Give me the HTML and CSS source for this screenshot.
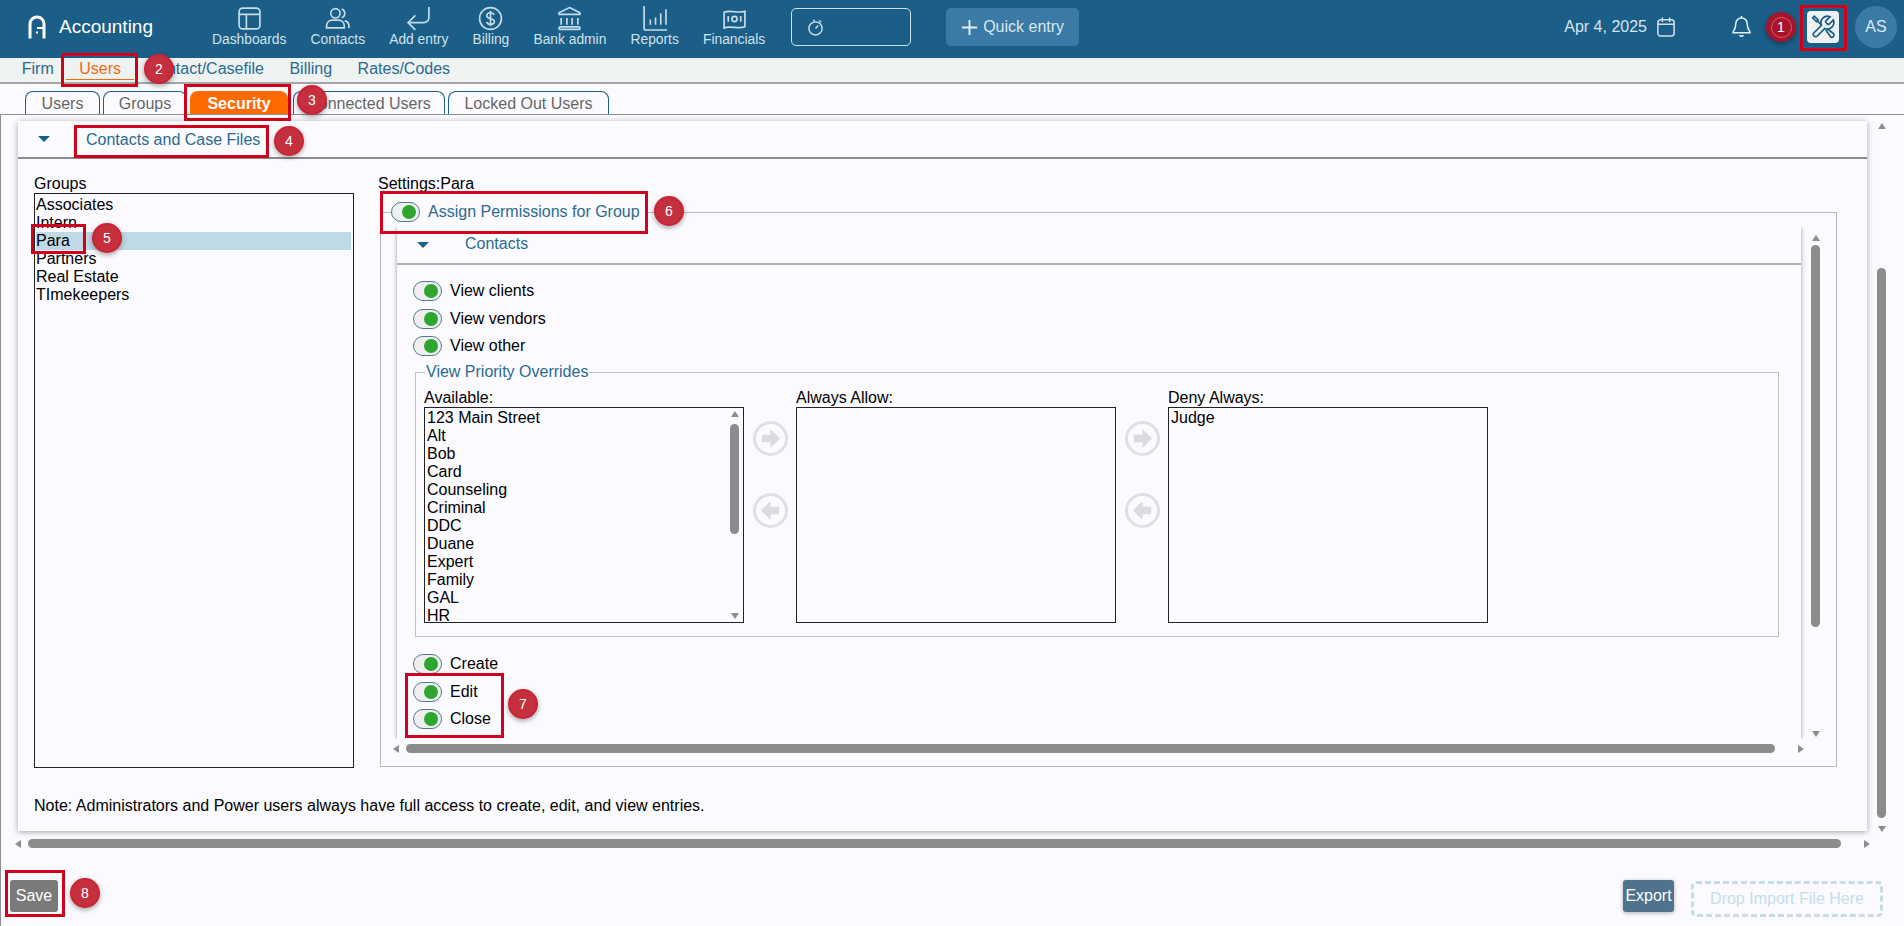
FILE: index.html
```html
<!DOCTYPE html>
<html lang="en">
<head>
<meta charset="utf-8">
<title>Accounting</title>
<link rel="stylesheet" href="styles.css">
</head>
<body>
<div class="app">
  <header class="topbar">
    <div class="brand">
      <svg class="logo" viewBox="0 0 18 24" fill="none" stroke="#fff" stroke-width="3"><path d="M2 23.500V9a7 7 0 0 1 14 0v14.500"/><path d="M8 17.500h2" stroke-width="2"/><path d="M9 13h7" stroke-width="2"/></svg>
      <span class="brand-name">Accounting</span>
    </div>
    <nav class="mainnav">
      <a class="navitem"><svg class="navicon" viewBox="0 0 24 24"><rect x="2" y="2" width="20" height="20" rx="3.5"/><path d="M2 8h20M9 8v14"/></svg>Dashboards</a>
      <a class="navitem"><svg class="navicon" viewBox="0 0 24 24"><circle cx="10" cy="7" r="4.5"/><path d="M1.5 21v-2a5.5 5.5 0 0 1 5.5-5.5h6a5.5 5.5 0 0 1 5.500 5.500v2z"/><path d="M16 2.800a4.500 4.500 0 0 1 0 8.500M19 14a5.500 5.500 0 0 1 4 5.500V21"/></svg>Contacts</a>
      <a class="navitem"><svg class="navicon" viewBox="0 0 24 24"><path d="M22 1v10a5 5 0 0 1-5 5H2"/><path d="M9 9l-7 7 7 7"/></svg>Add entry</a>
      <a class="navitem"><svg class="navicon" viewBox="0 0 24 24"><circle cx="12" cy="12" r="10.500"/><path d="M15.500 8.500c-.6-1.500-2-2-3.500-2-2 0-3.500 1-3.500 2.800 0 4 7.200 1.800 7.200 5.600 0 1.700-1.700 2.700-3.700 2.700-1.700 0-3.200-.7-3.700-2.300M12 4.500v15"/></svg>Billing</a>
      <a class="navitem"><svg class="navicon" viewBox="0 0 24 24"><path d="M12 1.500 22 6.500v1.500H2V6.500zM4 11.500v6.500M9.500 11.500v6.500M14.500 11.500v6.500M20 11.500v6.500"/><rect x="2" y="20" width="20" height="2.500" rx="1"/></svg>Bank admin</a>
      <a class="navitem"><svg class="navicon" viewBox="0 0 24 24"><path d="M2 0v21a2 2 0 0 0 2 2h20M8 13v5M13 11v7M18 7v11M23 3v15"/></svg>Reports</a>
      <a class="navitem"><svg class="navicon" viewBox="0 0 24 24"><path d="M2 6c6 -2.500 14 1.500 20 -1v15c-6 2.500-14-1.500-20 1z"/><circle cx="12" cy="12.500" r="2.500"/><path d="M6 9.500v5.500M18 9.500v5.500"/></svg>Financials</a>
    </nav>
    <button class="timer"><svg class="timer-icon" viewBox="0 0 18 18"><circle cx="9" cy="10" r="7"/><path d="M9 10l3-3M6.500 1.500h2M13 1.500l2 2"/></svg></button>
    <button class="quick"><svg class="plus" viewBox="0 0 18 18"><path d="M9 1v16M1 9h16"/></svg>Quick entry</button>
    <div class="date">Apr 4, 2025<svg class="cal" viewBox="0 0 20 22"><rect x="1" y="3" width="18" height="18" rx="3"/><path d="M1 8h18M6 .5v5M14 .5v5"/></svg></div>
    <svg class="bell" viewBox="0 0 20 24"><path d="M10 3a6 6 0 0 0-6 6c0 6-3 8-3 9.500h18c0-1.500-3-3.500-3-9.500a6 6 0 0 0-6-6zM8 21c1 1.600 3 1.600 4 0M10 1v2"/></svg>
    <button class="tools"><svg class="tools-icon" viewBox="0 0 24 24"><path d="M14.700 6.300a1 1 0 0 0 0 1.400l1.600 1.600a1 1 0 0 0 1.400 0l3.800-3.800a6 6 0 0 1-7.900 7.900l-6.900 6.900a2.100 2.100 0 0 1-3-3l6.900-6.900a6 6 0 0 1 7.900-7.900z"/><path d="M2.500 3.500 4 2l3.500 3.500-1.500 1.500zM7 6.500l3.500 3.500M14.500 14.500l4.500 6.500a2 2 0 0 0 2.800-2.800l-6-4.700"/></svg></button>
    <div class="avatar">AS</div>
  </header>

  <nav class="subnav">
    <a class="subitem">Firm</a>
    <a class="subitem active">Users</a>
    <a class="subitem">Contact/Casefile</a>
    <a class="subitem">Billing</a>
    <a class="subitem">Rates/Codes</a>
  </nav>

  <div class="tabs">
    <a class="tab tab-users">Users</a>
    <a class="tab tab-groups">Groups</a>
    <a class="tab tab-security">Security</a>
    <a class="tab tab-connected">Connected Users</a>
    <a class="tab tab-locked">Locked Out Users</a>
  </div>

  <main class="main">
    <div class="workspace">
      <section class="panel">
        <div class="panel-head">
          <span class="caret"></span>
          <span class="panel-title">Contacts and Case Files</span>
        </div>
        <div class="panel-body">
          <div class="columns">
            <div class="groups">
              <div class="label">Groups</div>
              <ul class="listbox groups-list">
                <li>Associates</li>
                <li>Intern</li>
                <li class="selected">Para</li>
                <li>Partners</li>
                <li>Real Estate</li>
                <li>TImekeepers</li>
              </ul>
            </div>
            <div class="settings">
              <div class="label">Settings:Para</div>
              <fieldset class="perm">
                <legend class="perm-legend"><span class="toggle"></span><span class="perm-title">Assign Permissions for Group</span></legend>
                <div class="inner">
                  <section class="inner-panel">
                    <div class="inner-head"><span class="caret"></span><span class="inner-title">Contacts</span></div>
                    <div class="inner-body">
                      <div class="toggles">
                        <label class="row"><span class="toggle"></span>View clients</label>
                        <label class="row"><span class="toggle"></span>View vendors</label>
                        <label class="row"><span class="toggle"></span>View other</label>
                      </div>
                      <fieldset class="overrides">
                        <legend class="over-legend">View Priority Overrides</legend>
                        <div class="picker">
                          <div class="pick">
                            <div class="pick-label">Available:</div>
                            <div class="listbox avail">
                              <ul class="avail-items">
                                <li>123 Main Street</li><li>Alt</li><li>Bob</li><li>Card</li><li>Counseling</li><li>Criminal</li><li>DDC</li><li>Duane</li><li>Expert</li><li>Family</li><li>GAL</li><li>HR</li>
                              </ul>
                              <div class="avail-bar"><span class="ar ar-up"></span><span class="avail-thumb"></span><span class="ar ar-down end"></span></div>
                            </div>
                          </div>
                          <div class="moves">
                            <button class="move"><svg viewBox="0 0 24 24"><path d="M3 8h9V2l10 10-10 10v-6H3z"/></svg></button>
                            <button class="move"><svg viewBox="0 0 24 24"><path d="M21 8h-9V2L2 12l10 10v-6h9z"/></svg></button>
                          </div>
                          <div class="pick">
                            <div class="pick-label">Always Allow:</div>
                            <div class="listbox avail"></div>
                          </div>
                          <div class="moves">
                            <button class="move"><svg viewBox="0 0 24 24"><path d="M3 8h9V2l10 10-10 10v-6H3z"/></svg></button>
                            <button class="move"><svg viewBox="0 0 24 24"><path d="M21 8h-9V2L2 12l10 10v-6h9z"/></svg></button>
                          </div>
                          <div class="pick">
                            <div class="pick-label">Deny Always:</div>
                            <div class="listbox avail"><ul class="avail-items"><li>Judge</li></ul></div>
                          </div>
                        </div>
                      </fieldset>
                      <div class="toggles lower">
                        <label class="row"><span class="toggle"></span>Create</label>
                        <label class="row"><span class="toggle"></span>Edit</label>
                        <label class="row"><span class="toggle"></span>Close</label>
                      </div>
                    </div>
                  </section>
                  <div class="vbar vbar-inner"><span class="ar ar-up"></span><span class="thumb-v thumb-inner"></span><span class="ar ar-down end"></span></div>
                  <div class="hbar hbar-inner"><span class="ar ar-left"></span><span class="thumb-h thumb-inner-h"></span><span class="ar ar-right end"></span></div>
                </div>
              </fieldset>
            </div>
          </div>
          <p class="note">Note: Administrators and Power users always have full access to create, edit, and view entries.</p>
        </div>
      </section>
      <div class="vbar vbar-outer"><span class="ar ar-up"></span><span class="thumb-v thumb-outer"></span><span class="ar ar-down end"></span></div>
      <div class="hbar hbar-outer"><span class="ar ar-left"></span><span class="thumb-h thumb-outer-h"></span><span class="ar ar-right end"></span></div>
    </div>
    <footer class="footer">
      <button class="save">Save</button>
      <button class="export">Export</button>
      <div class="drop">Drop Import File Here</div>
    </footer>
  </main>

  <div class="mark m1"></div><div class="mark m2"></div><div class="mark m3"></div><div class="mark m4"></div>
  <div class="mark m5"></div><div class="mark m6"></div><div class="mark m7"></div><div class="mark m8"></div>
  <div class="badge b1 first"><span class="ring">1</span></div>
  <div class="badge b2">2</div><div class="badge b3">3</div><div class="badge b4">4</div>
  <div class="badge b5">5</div><div class="badge b6">6</div><div class="badge b7">7</div><div class="badge b8">8</div>
</div>
</body>
</html>
```
FILE: styles.css
```css
* { box-sizing: border-box; }
html, body { margin: 0; height: 100%; }
body { font-family: "Liberation Sans", Arial, sans-serif; font-size: 16px; color: #000; background: #fbfbff; overflow: hidden; }
ul { list-style: none; margin: 0; padding: 0; }
button { font-family: inherit; cursor: pointer; }
a { cursor: pointer; }

.app { position: relative; width: 1904px; height: 926px; display: flex; flex-direction: column; overflow: hidden; }

/* top bar */
.topbar { height: 58px; flex: none; display: flex; align-items: flex-start; background: #1b5e88; color: #cfe2ec; padding: 0 7px 0 28px; }
.brand { display: flex; align-items: center; gap: 13px; width: 184px; height: 54px; color: #fff; flex: none; }
.logo { width: 18px; height: 24px; }
.brand-name { font-size: 19px; }
.mainnav { display: flex; gap: 24.200px; padding-top: 7px; }
.navitem { display: flex; flex-direction: column; align-items: center; font-size: 13.800px; line-height: 17px; gap: 2px; white-space: nowrap; }
.navicon { width: 25px; height: 25px; margin: -1px 0 -2px; fill: none; stroke: #c5dde9; stroke-width: 1.600; }
.timer { width: 120px; height: 38px; margin: 8px 0 0 26px; background: transparent; border: 1px solid #cfe2ec; border-radius: 5px; padding: 0 0 0 15px; display: flex; align-items: center; flex: none; }
.timer-icon { width: 17px; height: 17px; fill: none; stroke: #cfe2ec; stroke-width: 1.500; }
.quick { width: 133px; height: 38px; margin: 8px 0 0 35px; background: #3a7aa5; border: 0; border-radius: 5px; color: #d8e8f0; font-size: 16px; display: flex; align-items: center; gap: 5px; padding: 0 0 0 15px; flex: none; white-space: nowrap; }
.plus { width: 17px; height: 17px; fill: none; stroke: #e4eff4; stroke-width: 2; flex: none; }
.date { display: flex; align-items: center; gap: 10px; margin: 15px 0 0 auto; height: 24px; font-size: 16px; color: #d4e5ee; white-space: nowrap; }
.cal { width: 18px; height: 20px; fill: none; stroke: #cfe2ec; stroke-width: 1.700; flex: none; }
.bell { width: 19px; height: 23px; margin: 15px 0 0 57px; fill: none; stroke: #e4eff4; stroke-width: 1.600; flex: none; }
.tools { width: 32px; height: 32px; margin: 11px 0 0 56px; background: #eef2f3; border: 0; border-radius: 4px; padding: 3px; flex: none; }
.tools-icon { width: 26px; height: 26px; fill: none; stroke: #1b5e88; stroke-width: 1.600; display: block; }
.avatar { width: 42px; height: 42px; margin: 6px 0 0 16px; background: #3a7aa5; border-radius: 50%; display: flex; align-items: center; justify-content: center; font-size: 16px; color: #dbe9f1; flex: none; }

/* sub nav */
.subnav { height: 26px; flex: none; display: flex; background: #eef2f1; border-bottom: 2px solid #a4a6a8; padding-left: 9px; color: #2a6a90; }
.subitem { height: 22px; line-height: 22px; padding: 0 12.750px; white-space: nowrap; }
.subitem.active { color: #f26a10; border-bottom: 1px solid #f26a10; }

/* tabs */
.tabs { height: 30px; flex: none; display: flex; align-items: flex-end; padding-left: 25px; }
.tab { height: 23px; line-height: 24px; border: 1px solid #1b5e88; border-bottom: 0; border-radius: 8px 8px 0 0; color: #666; text-align: center; white-space: nowrap; margin-right: 3px; }
.tab-users { width: 75px; }
.tab-groups { width: 84px; }
.tab-security { width: 98px; background: #ff6a00; border-color: #ff6a00; color: #fff; font-weight: 700; margin-right: 5px; }
.tab-connected { width: 152px; }
.tab-locked { width: 161px; }

/* main */
.main { flex: 1; display: flex; flex-direction: column; border-top: 1px solid #8e8e92; border-left: 1px solid #8e8e92; }
.workspace { height: 764px; flex: none; display: grid; grid-template-columns: 1849px 30px; grid-template-rows: 710px 20px; padding: 6px 0 0 17px; }
.panel { background: #fbfbff; box-shadow: 0 1px 6px rgba(0, 0, 0, .35); display: flex; flex-direction: column; }
.panel-head { height: 38px; flex: none; border-bottom: 2px solid #8a8a90; display: flex; align-items: center; }
.caret { width: 0; height: 0; border-left: 6px solid transparent; border-right: 6px solid transparent; border-top: 6px solid #1b5e88; flex: none; }
.panel-head .caret { margin-left: 20px; }
.panel-title { margin-left: 36px; color: #2a6a90; position: relative; top: 1px; }
.panel-body { padding: 15px 0 0 16px; flex: 1; }
.columns { display: grid; grid-template-columns: 320px 1459px; gap: 24px; }
.label { height: 19px; line-height: 19px; }
.listbox { border: 1px solid #222; background: #fbfbff; }
.groups-list { height: 575px; padding: 2px 2px 0 1px; }
.groups-list li { height: 18px; line-height: 18px; }
.groups-list li.selected { background: #c0d9e6; }

.perm { margin: 9px 0 0 2px; padding: 5px 15px 0 16px; border: 1px solid #b8b8c0; height: 565px; min-width: 0; }
.perm-legend { padding: 0 6px 0 0; margin-left: -6px; display: flex; align-items: center; height: 20px; }
.perm-title { margin-left: 8px; color: #2a6a90; font-size: 16px; }

.toggle { display: inline-block; position: relative; width: 29px; height: 20px; border: 1px solid #4f7a94; border-radius: 10px; background: #efefef; flex: none; }
.toggle::after { content: ""; position: absolute; right: 3px; top: 2px; width: 14px; height: 14px; border-radius: 50%; background: #2ea52e; }

.inner { display: grid; grid-template-columns: 1404px 30px; grid-template-rows: 512px 24px; }
.inner-panel { box-shadow: -1px 0 4px rgba(0, 0, 0, .2), 1px 0 4px rgba(0, 0, 0, .2); overflow: hidden; clip-path: inset(0 -6px); }
.inner-head { height: 38px; border-bottom: 2px solid #b0b0b6; display: flex; align-items: center; }
.inner-head .caret { margin-left: 20px; }
.inner-title { margin-left: 36px; color: #2a6a90; position: relative; top: -1px; }
.inner-body { padding: 16px 0 0 16px; }
.toggles { display: flex; flex-direction: column; gap: 7.500px; }
.row { display: flex; align-items: center; gap: 8px; height: 20px; }
.overrides { margin: 6px 0 0 2px; width: 1364px; height: 275px; padding: 0 8px; border: 1px solid #c0c0c8; }
.over-legend { margin-left: 1px; padding: 0 1px; height: 20px; line-height: 20px; font-size: 16px; color: #2a6a90; }
.picker { display: grid; grid-template-columns: 320px 52px 320px 52px 320px; margin-top: 6px; }
.pick-label { height: 19px; line-height: 19px; }
.avail { position: relative; height: 216px; overflow: hidden; }
.avail-items { padding: 1px 0 0 2px; }
.avail-items li { height: 18px; line-height: 18px; }
.avail-bar { position: absolute; top: 3px; bottom: 3px; right: 4px; width: 9px; display: flex; flex-direction: column; align-items: center; }
.avail-thumb { width: 9px; height: 110px; margin-top: 7px; border-radius: 5px; background: #8c8c8c; }
.moves { display: flex; flex-direction: column; align-items: center; gap: 37px; padding-top: 33px; }
.move { width: 35px; height: 35px; padding: 3px; border: 3px solid #e0e0e4; border-radius: 50%; background: transparent; }
.move svg { display: block; width: 100%; height: 100%; fill: #dcdce0; }
.lower { margin-top: 17px; }

/* scrollbars */
.vbar { display: flex; flex-direction: column; align-items: center; width: 9px; }
.hbar { display: flex; align-items: center; height: 9px; }
.thumb-v { width: 9px; border-radius: 5px; background: #8c8c8c; flex: none; }
.thumb-h { height: 9px; border-radius: 5px; background: #8c8c8c; flex: none; }
.ar { width: 0; height: 0; flex: none; border-style: solid; border-color: transparent; }
.ar-up { border-width: 0 4px 6px; border-bottom-color: #8c8c8c; }
.ar-down { border-width: 6px 4px 0; border-top-color: #8c8c8c; }
.ar-left { border-width: 4px 6px 4px 0; border-right-color: #8c8c8c; }
.ar-right { border-width: 4px 0 4px 6px; border-left-color: #8c8c8c; }
.ar.end { margin-top: auto; }
.hbar .ar.end { margin-top: 0; margin-left: auto; }
.vbar-outer { margin: 2px 0 0 10px; height: 709px; }
.thumb-outer { height: 550px; margin-top: 139px; }
.hbar-outer { margin: 8px 0 0 -3px; width: 1855px; }
.thumb-outer-h { width: 1813px; margin-left: 7px; }
.vbar-inner { margin: 8px 0 0 10px; height: 502px; }
.thumb-inner { height: 382px; margin-top: 4px; }
.hbar-inner { margin: 5px 0 0 -4px; width: 1411px; }
.thumb-inner-h { width: 1369px; margin-left: 7px; }

.note { margin: 29px 0 0; line-height: 18px; }

/* footer */
.footer { flex: 1; display: flex; align-items: flex-start; padding: 1px 21px 0 9px; }
.save { width: 48px; height: 32px; padding: 0; background: #7a7a7a; border: 0; border-radius: 3px; color: #fff; font-size: 16px; margin-right: auto; }
.export { width: 51px; height: 32px; padding: 0; background: #4f738c; border: 0; border-radius: 3px; color: #fff; font-size: 16px; box-shadow: 0 1px 4px rgba(0, 0, 0, .3); }
.drop { width: 192px; height: 36px; margin: 1px 0 0 17px; border: 3px dashed #c4dde9; border-radius: 5px; color: #c4dde9; display: flex; align-items: center; justify-content: center; white-space: nowrap; }

/* annotation overlays */
.mark { position: absolute; border: 3px solid #d0021b; }
.m1 { left: 1800px; top: 5px; width: 47px; height: 46px; }
.m2 { left: 61px; top: 53px; width: 77px; height: 34px; }
.m3 { left: 184px; top: 84px; width: 107px; height: 37px; }
.m4 { left: 74px; top: 125px; width: 195px; height: 33px; }
.m5 { left: 31px; top: 224px; width: 55px; height: 30px; }
.m6 { left: 380px; top: 191px; width: 268px; height: 43px; }
.m7 { left: 405px; top: 673px; width: 99px; height: 65px; }
.m8 { left: 5px; top: 870px; width: 60px; height: 47px; }
.badge { position: absolute; width: 30px; height: 30px; margin: -15px 0 0 -15px; border-radius: 50%; background: #c5303f; border: 2px solid #cc2233; box-shadow: 0 2px 5px rgba(0, 0, 0, .35); color: #fff; font-size: 14px; display: flex; align-items: center; justify-content: center; }
.badge.first { background: #a8142c; border-color: #a8142c; }
.ring { width: 21px; height: 21px; border: 1px solid #d2606f; border-radius: 50%; display: flex; align-items: center; justify-content: center; }
.b1 { left: 1781px; top: 27px; }
.b2 { left: 159px; top: 69px; }
.b3 { left: 312px; top: 100px; }
.b4 { left: 289px; top: 141px; }
.b5 { left: 107px; top: 238px; }
.b6 { left: 669px; top: 211px; }
.b7 { left: 523px; top: 704px; }
.b8 { left: 85px; top: 893px; }
```
